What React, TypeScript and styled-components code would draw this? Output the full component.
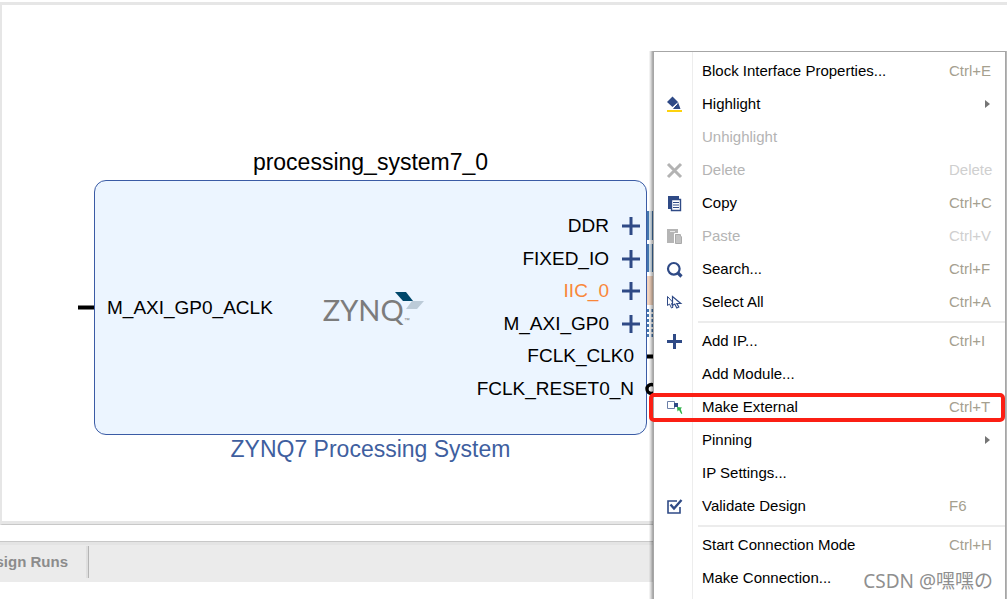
import React from "react";
import styled, { createGlobalStyle } from "styled-components";

const NAVY = "#2f4a86";

const GlobalStyle = createGlobalStyle`
  * { box-sizing: border-box; }
  body {
    margin: 0;
    background: #fff;
    font-family: "Liberation Sans", Arial, sans-serif;
    color: #000;
  }
`;

const Page = styled.div`
  position: relative;
  display: flex;
  flex-direction: column;
  min-height: 100vh;
  padding-top: 2px;
  overflow: hidden;
`;

const Canvas = styled.main`
  position: relative;
  height: 523px;
  flex: none;
  border-top: 3px solid #e6e6e6;
  border-left: 2px solid #e6e6e6;
  border-bottom: 1px solid #c8c8c8;
  box-shadow: inset 0 -3px 0 #e6e6e6;
`;

const BlockNode = styled.section`
  position: absolute;
  left: 92px;
  top: 141px;
  width: 553px;
`;

const BlockTitle = styled.h1`
  margin: 0;
  height: 34px;
  line-height: 32px;
  font-size: 23px;
  font-weight: 400;
  text-align: center;
`;

const BlockCaption = styled.p`
  margin: 0;
  height: 30px;
  line-height: 28px;
  font-size: 23px;
  color: #3f5f9f;
  text-align: center;
`;

const BlockBody = styled.div`
  display: flex;
  align-items: center;
  height: 255px;
  border: 1px solid #3a5ba5;
  border-radius: 12px;
  background: #ecf5ff;
  padding: 0 6px 0 12px;
`;

const PortLabel = styled.span<{ $active?: boolean }>`
  font-size: 19px;
  line-height: 24px;
  white-space: nowrap;
  color: ${(p) => (p.$active ? "#f9873a" : "#000")};
`;

const Brand = styled.div`
  position: relative;
  display: flex;
  height: 32px;
  margin-left: 50px;
`;

const BrandName = styled.span`
  font-family: Lato, "Open Sans", sans-serif;
  font-size: 29px;
  font-weight: 400;
  line-height: 36px;
  color: #7c7c7c;
`;

const BrandMark = styled.svg`
  position: absolute;
  left: 71px;
  top: 0;
`;

const TradeMark = styled.span`
  align-self: flex-end;
  font-size: 6px;
  line-height: 8px;
  color: #777;
`;

const PortList = styled.ul`
  display: flex;
  flex-direction: column;
  height: 195px;
  margin: 0 0 0 auto;
  padding: 0;
  list-style: none;
`;

const Port = styled.li<{ $bus?: boolean }>`
  flex: 1;
  display: flex;
  align-items: center;
  justify-content: flex-end;
  gap: 13px;
  padding-right: ${(p) => (p.$bus ? 0 : 6)}px;
`;

const Wires = styled.svg`
  position: absolute;
  top: 0;
  left: 0;
  width: 100%;
  height: 100%;
`;

const TabBar = styled.nav`
  display: flex;
  align-items: center;
  height: 41px;
  flex: none;
  margin-top: 16px;
  border-top: 1px solid #c8c8c8;
  box-shadow: inset 0 3px 0 #e4e4e4;
  background: #ebebeb;
`;

const Tab = styled.button`
  height: 32px;
  width: 89px;
  padding: 0 20px 0 0;
  border: 0;
  border-right: 1px solid #b4b4b4;
  background: transparent;
  box-shadow: inset -2px 0 0 #dfdfdf;
  font: bold 15px/32px "Liberation Sans", Arial, sans-serif;
  color: #8c8c8c;
  display: flex;
  justify-content: flex-end;
  white-space: nowrap;
  overflow: hidden;
`;

const Menu = styled.div`
  position: absolute;
  top: 51px;
  right: 1px;
  bottom: -8px;
  width: 353px;
  padding-top: 3px;
  border: 1px solid #a6a6a6;
  background: linear-gradient(to right, #fff 38px, #ededed 38px, #ededed 39px, #fff 39px);
  box-shadow:
    -1px 0 0 rgba(0, 0, 0, 0.12),
    -2px 0 0 rgba(0, 0, 0, 0.1),
    -3px 0 0 rgba(0, 0, 0, 0.08),
    -4px 0 0 rgba(0, 0, 0, 0.05),
    1px 0 0 #b8b8b8;
`;

const MenuItem = styled.button`
  display: grid;
  grid-template-columns: 48px 1fr 56px;
  align-items: center;
  width: 100%;
  height: 33px;
  padding: 0 0 2px;
  border: 0;
  background: transparent;
  font: 15px/20px "Liberation Sans", Arial, sans-serif;
  text-align: left;
  color: #000;
  &:disabled { color: #b4b4b4; }
`;

const IconSlot = styled.span`
  display: flex;
  padding: 2px 0 0 12px;
`;

const Shortcut = styled.span<{ $dim?: boolean }>`
  color: ${(p) => (p.$dim ? "#cfcfcf" : "#a5a08f")};
`;

const Arrow = styled.span`
  width: 0;
  margin-left: 36px;
  border-left: 5px solid #757575;
  border-top: 4px solid transparent;
  border-bottom: 4px solid transparent;
`;

const Divider = styled.hr`
  height: 2px;
  margin: 2px 0 2px 44px;
  border: 0;
  background: #ececec;
`;

const Highlighted = styled.div`
  position: relative;
  &::after {
    content: "";
    position: absolute;
    inset: 2px 0 2px -5px;
    border: 4px solid #fb1f14;
    border-radius: 5px;
    pointer-events: none;
  }
`;

const Watermark = styled.div`
  position: absolute;
  right: 14px;
  bottom: 4px;
  font: 19px/28px "Noto Sans", "Noto Sans CJK SC", sans-serif;
  color: #8f8f8f;
`;

const Svg = ({ children }: { children: React.ReactNode }) => (
  <svg width="17" height="17" viewBox="0 0 17 17" fill="none" aria-hidden="true">{children}</svg>
);

const icons: Record<string, React.ReactNode> = {
  highlight: (
    <Svg>
      <path d="M6.500 0.500L12 6l-5.500 5L1 6z" fill={NAVY} />
      <path d="M12 6l2.500 7H7z" fill={NAVY} />
      <path d="M7 12l4.500-4.500" stroke="#fff" strokeWidth="1" />
      <path d="M1 14h15v2H1z" fill="#fdd20e" />
    </Svg>
  ),
  delete: <Svg><path d="M2 2l13 13M15 2L2 15" stroke="#b3b3b3" strokeWidth="3" /></Svg>,
  copy: (
    <Svg>
      <path d="M2 1h11v3H5v10H2z" fill={NAVY} />
      <path d="M5.500 4.500h9v11h-9z" fill="#fff" stroke={NAVY} strokeWidth="1.400" />
      <path d="M7 7.500h6M7 10h6M7 12.500h6" stroke={NAVY} />
    </Svg>
  ),
  paste: (
    <Svg>
      <path d="M1 1h11v14H1z" fill="#b5b5b5" />
      <path d="M4 3.500h5" stroke="#e8e8e8" />
      <path d="M8.500 5.500h7v10h-7z" fill="#c4c4c4" stroke="#fff" />
      <path d="M9.500 6.500h4l2 2.500v6.500h-6z" fill="#c2c2c2" stroke="#aaa" />
    </Svg>
  ),
  search: (
    <Svg>
      <circle cx="7.800" cy="7.800" r="5.800" stroke={NAVY} strokeWidth="2.200" />
      <path d="M12 12l3.500 3.500" stroke={NAVY} strokeWidth="3.200" />
    </Svg>
  ),
  select: (
    <Svg>
      <path d="M1.500 2.500v9l2-1.500 2 4 1.500-.800-1.500-3.700h2.500z" stroke={NAVY} />
      <path d="M6.500 2.500v9l2.300-1.500 2 4 2-1-2-3.500h4z" fill="#fff" stroke={NAVY} strokeWidth="1.200" />
    </Svg>
  ),
  add: <Svg><path d="M8.500 1v15M1 8.500h15" stroke={NAVY} strokeWidth="3" /></Svg>,
  external: (
    <Svg>
      <path d="M1.500 2.500h7v7h-7z" stroke="#6b7fa8" />
      <path d="M8 4h4v4H8z" fill={NAVY} />
      <path d="M11 8l5 0.500-1.300 1.500 1.600 4.500-1 .500-2.300-4-1.500 1.500z" fill="#2fb14a" />
    </Svg>
  ),
  validate: (
    <Svg>
      <path d="M11 3H2v12h12V9" stroke={NAVY} strokeWidth="1.600" />
      <path d="M4.500 6.500l3.500 4L15.500 2" stroke={NAVY} strokeWidth="2.400" />
    </Svg>
  ),
};

type Item = {
  label: string;
  icon?: string;
  keys?: string;
  sub?: boolean;
  off?: boolean;
  marked?: boolean;
};

const groups: Item[][] = [
  [
    { label: "Block Interface Properties...", keys: "Ctrl+E" },
    { label: "Highlight", icon: "highlight", sub: true },
    { label: "Unhighlight", off: true },
    { label: "Delete", icon: "delete", keys: "Delete", off: true },
    { label: "Copy", icon: "copy", keys: "Ctrl+C" },
    { label: "Paste", icon: "paste", keys: "Ctrl+V", off: true },
    { label: "Search...", icon: "search", keys: "Ctrl+F" },
    { label: "Select All", icon: "select", keys: "Ctrl+A" },
  ],
  [
    { label: "Add IP...", icon: "add", keys: "Ctrl+I" },
    { label: "Add Module..." },
    { label: "Make External", icon: "external", keys: "Ctrl+T", marked: true },
    { label: "Pinning", sub: true },
    { label: "IP Settings..." },
    { label: "Validate Design", icon: "validate", keys: "F6" },
  ],
  [
    { label: "Start Connection Mode", keys: "Ctrl+H" },
    { label: "Make Connection..." },
  ],
];

const ports = [
  { name: "DDR", bus: true },
  { name: "FIXED_IO", bus: true },
  { name: "IIC_0", bus: true, active: true },
  { name: "M_AXI_GP0", bus: true },
  { name: "FCLK_CLK0" },
  { name: "FCLK_RESET0_N" },
];

const MenuRow = ({ item }: { item: Item }) => {
  const row = (
    <MenuItem disabled={item.off}>
      <IconSlot>{item.icon && icons[item.icon]}</IconSlot>
      <span>{item.label}</span>
      {item.sub ? <Arrow /> : <Shortcut $dim={item.off}>{item.keys}</Shortcut>}
    </MenuItem>
  );
  return item.marked ? <Highlighted>{row}</Highlighted> : row;
};

export default function App() {
  return (
    <>
      <GlobalStyle />
      <Page>
        <Canvas>
          <BlockNode>
            <BlockTitle>processing_system7_0</BlockTitle>
            <BlockBody>
              <PortLabel>M_AXI_GP0_ACLK</PortLabel>
              <Brand>
                <BrandName>ZYNQ</BrandName>
                <TradeMark>™</TradeMark>
                <BrandMark width="32" height="34" viewBox="0 0 32 34" aria-hidden="true">
                  <path d="M1 0h11l7 9H9z" fill="#00476b" />
                  <path d="M18 9h12l-7 8H12z" fill="#bccbd8" />
                </BrandMark>
              </Brand>
              <PortList>
                {ports.map((p) => (
                  <Port key={p.name} $bus={p.bus}>
                    <PortLabel $active={p.active}>{p.name}</PortLabel>
                    {p.bus && (
                      <svg width="18" height="18" viewBox="0 0 18 18" aria-hidden="true">
                        <path d="M9 0v18M0 9h18" stroke={NAVY} strokeWidth="3" />
                      </svg>
                    )}
                  </Port>
                ))}
              </PortList>
            </BlockBody>
            <BlockCaption>ZYNQ7 Processing System</BlockCaption>
          </BlockNode>
          <Wires aria-hidden="true">
            <path d="M76 302.500h16M645 351.500h6" stroke="#000" strokeWidth="4" />
            <path d="M645 206h6v29h-6zM645 239h6v28h-6z" fill="#4477ad" />
            <path d="M647 206h3v29h-3zM647 239h3v28h-3z" fill="#dbe8f2" />
            <path d="M645 271h6v29h-6z" fill="#f3d3bd" />
            <path d="M646 304v30M650.500 304v30" stroke="#4477ad" strokeWidth="2" strokeDasharray="3 2" />
            <circle cx="649.500" cy="384" r="4.500" fill="none" stroke="#000" strokeWidth="3.400" />
          </Wires>
        </Canvas>
        <TabBar>
          <Tab>sign Runs</Tab>
        </TabBar>
        <Menu>
          {groups.map((group, i) => (
            <React.Fragment key={group[0].label}>
              {i > 0 && <Divider />}
              {group.map((item) => <MenuRow key={item.label} item={item} />)}
            </React.Fragment>
          ))}
        </Menu>
        <Watermark>CSDN @嘿嘿の</Watermark>
      </Page>
    </>
  );
}
